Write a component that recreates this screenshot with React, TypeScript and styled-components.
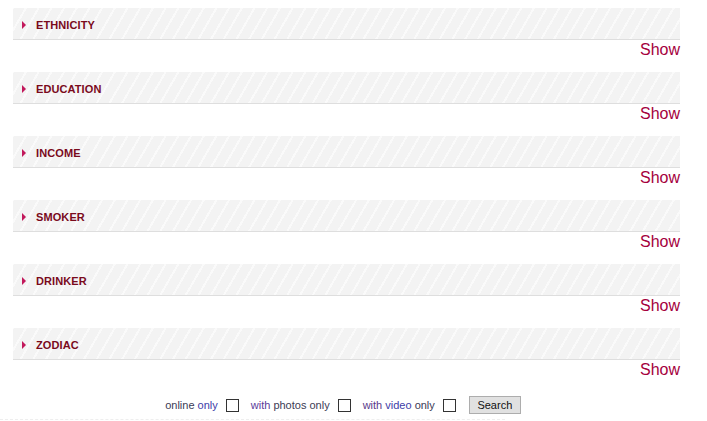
import React from "react";
import styled, { createGlobalStyle } from "styled-components";

const Global = createGlobalStyle`
  html, body { margin: 0; padding: 0; background: #fff; }
  body { font-family: "Liberation Sans", Arial, sans-serif; }
`;

const Page = styled.div`
  width: 667px;
  padding: 8px 0 0 13px;
`;

const Section = styled.section<{ $last?: boolean }>`
  display: flex;
  flex-direction: column;
  margin-bottom: ${(p) => (p.$last ? "0" : "12px")};
`;

const Header = styled.div`
  height: 31px;
  display: flex;
  align-items: center;
  gap: 10px;
  padding: 3px 0 0 9px;
  box-sizing: border-box;
  height: 32px;
  border-bottom: 1px solid #dedede;
  background-color: #f3f3f3;
  background-image: repeating-linear-gradient(
    -60deg,
    rgba(255, 255, 255, 0) 0px,
    rgba(255, 255, 255, 0) 9px,
    rgba(255, 255, 255, 0.6) 9px,
    rgba(255, 255, 255, 0.6) 11px
  );
`;

const Arrow = styled.span`
  width: 0;
  height: 0;
  border-top: 4.5px solid transparent;
  border-bottom: 4.5px solid transparent;
  border-left: 4px solid #c2185b;
`;

const Title = styled.span`
  font-size: 11px;
  font-weight: bold;
  color: #7a0a1c;
  letter-spacing: 0.1px;
`;

const ShowRow = styled.div`
  display: flex;
  justify-content: flex-end;
  height: 20px;
  line-height: 20px;
`;

const ShowLink = styled.a`
  font-size: 16px;
  color: #a5003d;
  text-decoration: none;
  cursor: pointer;
`;

const Filters = styled.div`
  display: flex;
  align-items: center;
  justify-content: center;
  margin-top: 16px;
  padding-right: 7px;
  height: 18px;
  font-size: 11px;
`;

const Label = styled.span`
  color: #3b3b55;
  margin-right: 8px;
`;

const Accent = styled.span<{ $c: string }>`
  color: ${(p) => p.$c};
`;

const Box = styled.span`
  width: 11px;
  height: 11px;
  border: 1px solid #333;
  background: #fff;
  margin-right: 12px;
`;

const Button = styled.button`
  height: 18px;
  width: 52px;
  margin-left: 1px;
  padding: 0;
  font-family: "Liberation Sans", Arial, sans-serif;
  font-size: 11px;
  color: #111;
  background: #e1e1e1;
  border: 1px solid #adadad;
`;

const Dashed = styled.div`
  margin: 5px 0 0 -13px;
  width: 505px;
  border-top: 1px dashed #eeeeee;
`;

const items = ["ETHNICITY", "EDUCATION", "INCOME", "SMOKER", "DRINKER", "ZODIAC"];

export default function App() {
  return (
    <>
      <Global />
      <Page>
        {items.map((t, i) => (
          <Section key={t} $last={i === items.length - 1}>
            <Header>
              <Arrow />
              <Title>{t}</Title>
            </Header>
            <ShowRow>
              <ShowLink>Show</ShowLink>
            </ShowRow>
          </Section>
        ))}
        <Filters>
          <Label>
            online <Accent $c="#3c3ca8">only</Accent>
          </Label>
          <Box />
          <Label>
            <Accent $c="#5a3a9a">with</Accent> photos only
          </Label>
          <Box />
          <Label>
            <Accent $c="#5a3a8a">with</Accent> <Accent $c="#3c3ca8">video</Accent> only
          </Label>
          <Box />
          <Button>Search</Button>
        </Filters>
        <Dashed />
      </Page>
    </>
  );
}
